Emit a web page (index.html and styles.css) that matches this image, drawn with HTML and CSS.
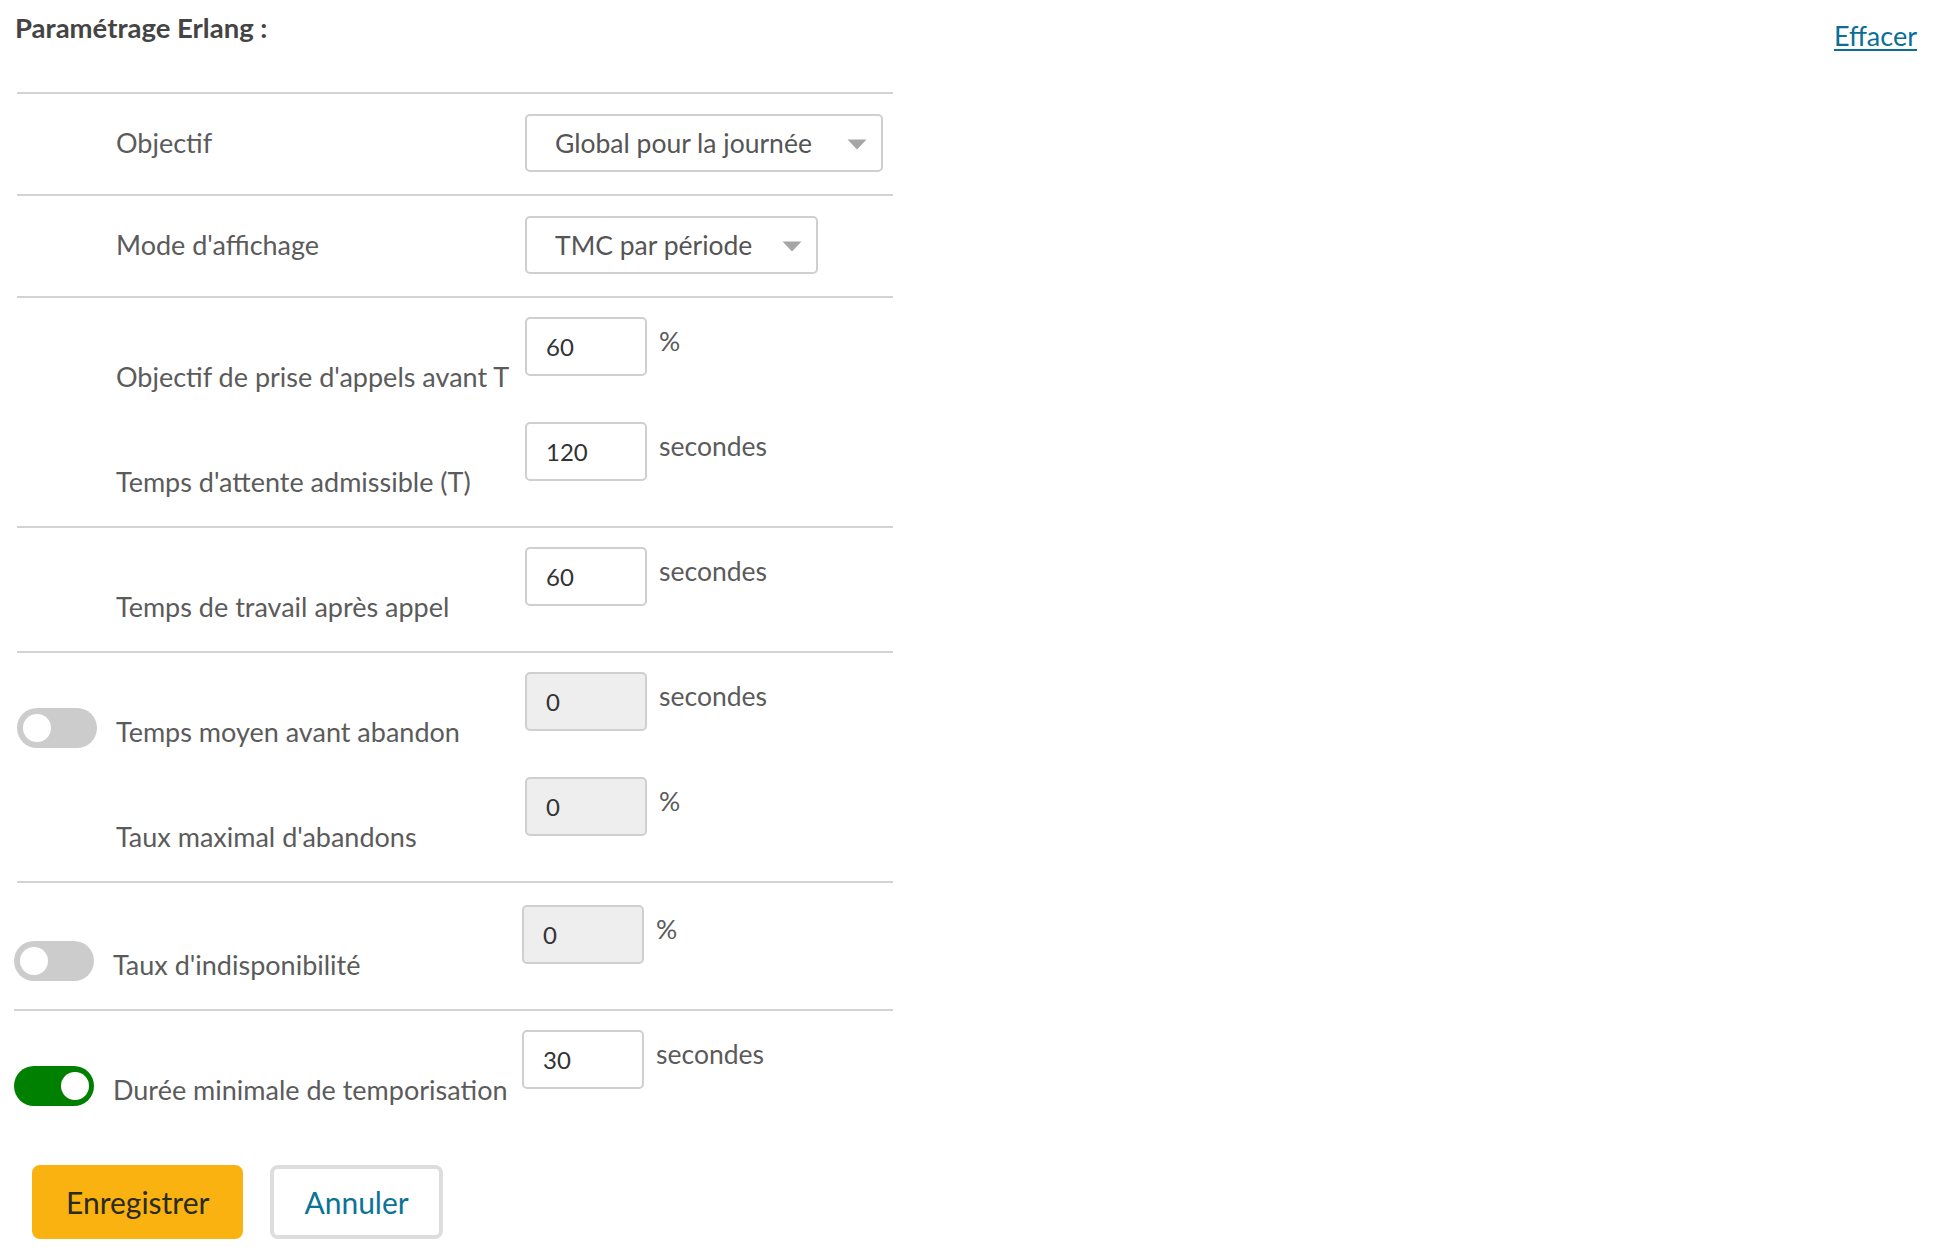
FILE: index.html
```html
<!DOCTYPE html>
<html lang="fr">
<head>
<meta charset="utf-8">
<title>Paramétrage Erlang</title>
<link rel="stylesheet" href="styles.css">
</head>
<body>
<div class="page">
  <header class="header">
    <h2 class="title">Paramétrage Erlang :</h2>
    <a class="clear-link" href="#">Effacer</a>
  </header>

  <form class="form">
    <section class="section section-select">
      <div class="row-select">
        <div class="col-left"></div>
        <label class="label">Objectif</label>
        <div class="select">
          <span class="select-text">Global pour la journée</span>
          <svg class="select-arrow" width="20" height="11" viewBox="0 0 20 11"><path d="M0.5 0.5 L19.5 0.5 L10 10.5 Z" fill="#a6a6a6"/></svg>
        </div>
      </div>
    </section>

    <section class="section section-select">
      <div class="row-select">
        <div class="col-left"></div>
        <label class="label">Mode d'affichage</label>
        <div class="select select-compact">
          <span class="select-text">TMC par période</span>
          <svg class="select-arrow" width="20" height="11" viewBox="0 0 20 11"><path d="M0.5 0.5 L19.5 0.5 L10 10.5 Z" fill="#a6a6a6"/></svg>
        </div>
      </div>
    </section>

    <section class="section">
      <div class="row">
        <div class="col-left"></div>
        <label class="label label-field">Objectif de prise d'appels avant T</label>
        <input class="input" type="text" value="60">
        <span class="unit">%</span>
      </div>
      <div class="row">
        <div class="col-left"></div>
        <label class="label label-field">Temps d'attente admissible (T)</label>
        <input class="input" type="text" value="120">
        <span class="unit">secondes</span>
      </div>
    </section>

    <section class="section">
      <div class="row">
        <div class="col-left"></div>
        <label class="label label-field">Temps de travail après appel</label>
        <input class="input" type="text" value="60">
        <span class="unit">secondes</span>
      </div>
    </section>

    <section class="section">
      <div class="row">
        <div class="col-left"><span class="toggle"><span class="knob"></span></span></div>
        <label class="label label-field">Temps moyen avant abandon</label>
        <input class="input" type="text" value="0" disabled>
        <span class="unit">secondes</span>
      </div>
      <div class="row">
        <div class="col-left"></div>
        <label class="label label-field">Taux maximal d'abandons</label>
        <input class="input" type="text" value="0" disabled>
        <span class="unit">%</span>
      </div>
    </section>

    <section class="section section-shift section-shift-top">
      <div class="row">
        <div class="col-left"><span class="toggle"><span class="knob"></span></span></div>
        <label class="label label-field">Taux d'indisponibilité</label>
        <input class="input" type="text" value="0" disabled>
        <span class="unit">%</span>
      </div>
    </section>

    <section class="section section-shift section-last">
      <div class="row">
        <div class="col-left"><span class="toggle toggle-on"><span class="knob"></span></span></div>
        <label class="label label-field">Durée minimale de temporisation</label>
        <input class="input" type="text" value="30">
        <span class="unit">secondes</span>
      </div>
    </section>

    <div class="actions">
      <button type="button" class="btn btn-primary">Enregistrer</button>
      <button type="button" class="btn btn-secondary">Annuler</button>
    </div>
  </form>
</div>
</body>
</html>
```

FILE: styles.css
```css
html, body {
  margin: 0;
  padding: 0;
  background: #ffffff;
}

body {
  font-family: Lato, "Open Sans", "Liberation Sans", sans-serif;
  color: #5b5b5b;
}

.page {
  padding: 11px 19px 0 15px;
}

.header {
  display: flex;
  justify-content: space-between;
  align-items: flex-start;
}

.title {
  margin: 0;
  font-size: 27.5px;
  font-weight: 700;
  line-height: 1.2;
  color: #444444;
}

.clear-link {
  margin-top: 9px;
  font-size: 27px;
  line-height: 1.2;
  color: #0b6f95;
  text-decoration: underline;
  text-underline-offset: 3px;
  text-decoration-thickness: 2px;
}

.form {
  width: 876px;
  margin: 40px 0 0 2px;
  border-top: 2px solid #d3d3d3;
}

.section {
  border-bottom: 2px solid #d3d3d3;
  padding-bottom: 18px;
}

.section-select {
  padding: 20px 0 22px;
}

.section-shift {
  margin-left: -3px;
}

.section-shift-top {
  padding-top: 3px;
}

.section-last {
  border-bottom: none;
  padding-bottom: 0;
}

.row-select {
  display: flex;
  align-items: center;
}

.row {
  display: flex;
  align-items: flex-start;
  height: 105px;
}

.col-left {
  width: 99px;
  flex: none;
}

.label {
  width: 409px;
  flex: none;
  font-size: 27px;
  line-height: 1.2;
  color: #5b5b5b;
  white-space: nowrap;
}

.label-field {
  padding-top: 63px;
}

.select {
  display: inline-flex;
  align-items: center;
  gap: 35px;
  box-sizing: border-box;
  height: 58px;
  padding: 0 14px 0 28px;
  border: 2px solid #cfcfcf;
  border-radius: 5px;
  background: #ffffff;
  font-size: 26.5px;
  color: #555555;
}

.select-compact {
  gap: 30px;
}

.select-arrow {
  display: block;
  flex: none;
  margin-top: 2px;
}

.input {
  box-sizing: border-box;
  width: 122px;
  height: 59px;
  margin: 19px 0 0;
  padding: 0 0 0 19px;
  border: 2px solid #cfcfcf;
  border-radius: 5px;
  background: #ffffff;
  font-family: Lato, "Open Sans", "Liberation Sans", sans-serif;
  font-size: 24px;
  color: #333333;
  outline: none;
}

.input:disabled {
  background: #eeeeee;
  color: #333333;
  -webkit-text-fill-color: #333333;
  opacity: 1;
}

.unit {
  margin: 28px 0 0 12px;
  font-size: 26.5px;
  line-height: 1.2;
  color: #5b5b5b;
}

.toggle {
  display: flex;
  align-items: center;
  box-sizing: border-box;
  width: 80px;
  height: 40px;
  margin-top: 55px;
  padding: 0 6px;
  border-radius: 20px;
  background: #cccccc;
}

.toggle-on {
  justify-content: flex-end;
  background: #008000;
  padding: 0 5px;
}

.knob {
  width: 28px;
  height: 28px;
  border-radius: 50%;
  background: #ffffff;
}

.actions {
  display: flex;
  gap: 27px;
  margin-top: 49px;
  padding-left: 15px;
}

.btn {
  box-sizing: border-box;
  height: 74px;
  padding: 0 30px;
  border: 4px solid transparent;
  border-radius: 8px;
  font-family: Lato, "Open Sans", "Liberation Sans", sans-serif;
  font-size: 30px;
  line-height: 1;
  cursor: pointer;
}

.btn-primary {
  background: #f9b20f;
  border-color: #f9b20f;
  color: #2a2a1e;
}

.btn-secondary {
  background: #ffffff;
  border-color: #dddddd;
  color: #0b7396;
}
```
